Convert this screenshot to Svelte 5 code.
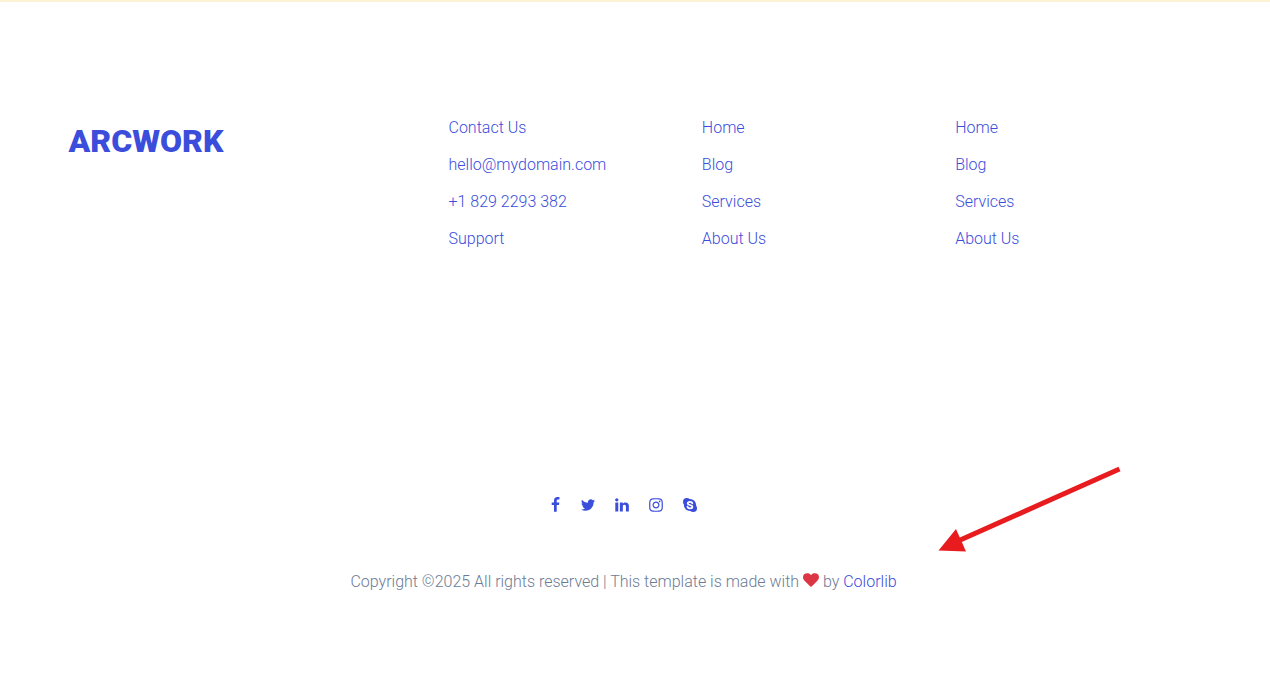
<script>
  const columns = [
    ['Contact Us', 'hello@mydomain.com', '+1 829 2293 382', 'Support'],
    ['Home', 'Blog', 'Services', 'About Us'],
    ['Home', 'Blog', 'Services', 'About Us'],
  ];

  const socials = [
    {
      name: 'Facebook',
      width: 10,
      box: '400 0 1120 1792',
      path: 'M1343 12v264h-157q-86 0-116 36t-30 108v189h293l-39 296h-254v759h-306v-759h-255v-296h255v-218q0-186 104-288.5t277-102.5q147 0 228 12z',
    },
    {
      name: 'Twitter',
      width: 14,
      box: '112 0 1568 1792',
      path: 'M1684 408q-67 98-162 167 1 14 1 42 0 130-38 259.5t-115.5 248.5-184.5 210.5-258 146-323 54.5q-271 0-496-145 35 4 78 4 225 0 401-138-105-2-188-64.5t-114-159.5q33 5 61 5 43 0 85-11-112-23-185.5-111.5t-73.5-205.5v-4q68 38 146 41-66-44-105-115t-39-154q0-88 44-163 121 149 294.5 238.5t371.5 99.5q-8-38-8-74 0-134 94.5-228.5t228.5-94.5q140 0 236 102 109-21 205-78-37 115-142 178 93-10 186-50z',
    },
    {
      name: 'LinkedIn',
      width: 14,
      box: '112 0 1568 1792',
      path: 'M477 625v991h-330v-991h330zm21-306q1 73-50.5 122t-135.5 49h-2q-82 0-132-49t-50-122q0-74 51.5-122.5t134.5-48.5 133 48.5 51 122.5zm1166 729v568h-329v-530q0-105-40.5-164.5t-126.5-59.5q-63 0-105.5 34.5t-63.5 85.5q-11 30-11 81v553h-329q2-399 2-647t-1-296l-1-48h329v144h-2q20-32 41-56t56.5-52 87-43.5 114.5-15.5q171 0 282 113.5t111 332.5z',
    },
    {
      name: 'Instagram',
      width: 14,
      box: '112 0 1568 1792',
      path: 'M1152 896q0-106-75-181t-181-75-181 75-75 181 75 181 181 75 181-75 75-181zm138 0q0 164-115 279t-279 115-279-115-115-279 115-279 279-115 279 115 115 279zm108-410q0 38-27 65t-65 27-65-27-27-65 27-65 65-27 65 27 27 65zm-502-220q-7 0-76.5-.5t-105.5 0-96.5 3-103 10-71.5 18.5q-50 20-88 58t-58 88q-11 29-18.5 71.5t-10 103-3 96.5 0 105.5.5 76.5-.5 76.5 0 105.5 3 96.5 10 103 18.5 71.5q20 50 58 88t88 58q29 11 71.5 18.5t103 10 96.5 3 105.5 0 76.5-.5 76.5.5 105.5 0 96.5-3 103-10 71.5-18.5q50-20 88-58t58-88q11-29 18.5-71.5t10-103 3-96.5 0-105.5-.5-76.5.5-76.5 0-105.5-3-96.5-10-103-18.5-71.5q-20-50-58-88t-88-58q-29-11-71.5-18.5t-103-10-96.5-3-105.5 0-76.5.5zm768 630q0 229-5 317-10 208-124 322t-322 124q-88 5-317 5t-317-5q-208-10-322-124t-124-322q-5-88-5-317t5-317q10-208 124-322t322-124q88-5 317-5t317 5q208 10 322 124t124 322q5 88 5 317z',
    },
  ];
</script>

<footer class="footer">
  <div class="container">
    <div class="top">
      <a class="logo" href="#home">ARCWORK</a>
      <nav class="links" aria-label="Footer">
        {#each columns as items}
          <ul>
            {#each items as item}
              <li><a href="#link">{item}</a></li>
            {/each}
          </ul>
        {/each}
      </nav>
    </div>

    <div class="socials">
      {#each socials as s}
        <a href="#social" aria-label={s.name}>
          <svg width={s.width} height="16" viewBox={s.box}><path d={s.path} fill="currentColor" /></svg>
        </a>
      {/each}
      <a href="#social" aria-label="Skype">
        <svg width="14" height="16" viewBox="0 0 14 16">
          <g fill="currentColor">
            <circle cx="7" cy="8" r="6.1" />
            <circle cx="3.8" cy="4.8" r="3.8" />
            <circle cx="10.2" cy="11.2" r="3.8" />
          </g>
          <path
            d="M9.3 6.3C9.1 5.3 8.2 4.8 7 4.8C5.6 4.8 4.7 5.4 4.7 6.4C4.7 7.4 5.8 7.7 7 8C8.3 8.3 9.4 8.6 9.4 9.7C9.4 10.7 8.4 11.3 7 11.3C5.6 11.3 4.7 10.6 4.5 9.7"
            fill="none" stroke="#fff" stroke-width="1.8" stroke-linecap="round" />
        </svg>
      </a>
    </div>

    <p class="copyright">
      Copyright ©2025 All rights reserved | This template is made with
      <svg class="heart" width="16" height="16" viewBox="0 0 1792 1792" role="img" aria-label="love"><path
        d="M896 1664q-26 0-44-18l-624-602q-10-8-27.5-26t-55.5-65.5-68-97.5-53.5-121-23.5-138q0-220 127-344t351-124q62 0 126.5 21.5t120 58 95.5 68.5 76 68q36-36 76-68t95.5-68.5 120-58 126.5-21.5q224 0 351 124t127 344q0 221-229 450l-623 600q-18 18-44 18z"
        fill="currentColor" /></svg>
      by <a href="#colorlib">Colorlib</a>
    </p>
  </div>

  <svg class="arrow" width="184" height="88" viewBox="0 0 184 88" aria-hidden="true">
    <path d="M181.5 4L20 76" stroke="#e81c1e" stroke-width="5" />
    <path d="M0.5 85.5L18 64L28 86.5Z" fill="#e81c1e" />
  </svg>
</footer>

<style>
  :global(body) {
    margin: 0;
    background: #fff;
  }

  .footer {
    position: relative;
    box-sizing: border-box;
    padding: 112px 23px 96px 0;
    border-top: 2px solid #fff3d6;
    font: 300 16px/27px Roboto, sans-serif;
    color: #6c7b95;
  }

  a {
    color: #3b4ddb;
    text-decoration: none;
  }

  .container {
    box-sizing: border-box;
    max-width: 1140px;
    margin: 0 auto;
    padding: 0 15px;
  }

  .top {
    display: grid;
    grid-template-columns: 1fr 2fr;
    margin-right: -30px;
  }

  .logo {
    justify-self: start;
    padding-top: 3px;
    font-size: 32px;
    font-weight: 900;
    line-height: 48px;
  }

  .links {
    display: grid;
    grid-template-columns: repeat(3, 1fr);
  }

  ul {
    display: flex;
    flex-direction: column;
    gap: 10px;
    margin: 0;
    padding: 0;
    list-style: none;
  }

  .socials {
    display: flex;
    justify-content: center;
    gap: 20px;
    margin-top: 245px;
  }

  .socials a,
  .socials svg {
    display: block;
  }

  .copyright {
    margin: 55px 0 0;
    text-align: center;
  }

  .heart {
    vertical-align: -1px;
    color: #dc3545;
  }

  .arrow {
    position: absolute;
    top: 463px;
    left: 938px;
  }
</style>
